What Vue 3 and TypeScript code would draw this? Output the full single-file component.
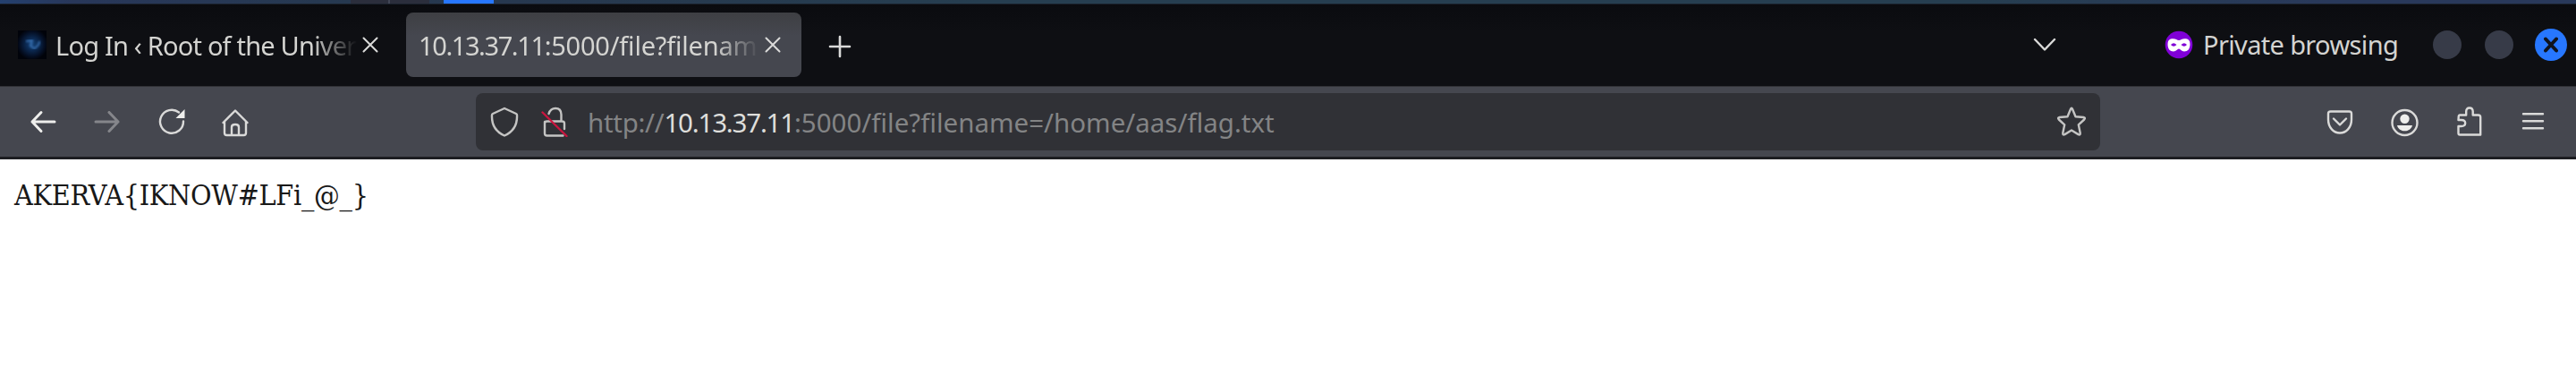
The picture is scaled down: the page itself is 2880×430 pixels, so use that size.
<script setup lang="ts">
interface Tab {
  host: string
  title: string
  active: boolean
  icon: boolean
}

const tabs: Tab[] = [
  { host: '', title: 'Log In ‹ Root of the Univer', active: false, icon: true },
  { host: '10.13.37.11', title: ':5000/file?filenam', active: true, icon: false },
]

const url = { scheme: 'http://', host: '10.13.37.11', rest: ':5000/file?filename=/home/aas/flag.txt' }
const flag = 'AKERVA{IKNOW#LFi_@_}'
</script>

<template>
  <div class="screen">
    <div class="desktop-strip">
      <span class="workspace"></span>
      <span class="active-task"></span>
    </div>
    <header class="titlebar">
      <div v-for="tab in tabs" :key="tab.title" class="tab" :class="{ active: tab.active }">
        <span v-if="tab.icon" class="favicon">
          <svg viewBox="0 0 32 32" width="32" height="32">
            <defs>
              <radialGradient id="nebula" cx="50%" cy="48%" r="55%">
                <stop offset="0" stop-color="#164378" />
                <stop offset="0.4" stop-color="#0b2850" />
                <stop offset="0.8" stop-color="#040d20" />
                <stop offset="1" stop-color="#01030a" />
              </radialGradient>
              <filter id="glow"><feGaussianBlur stdDeviation="1" /></filter>
            </defs>
            <rect width="32" height="32" fill="url(#nebula)" />
            <path class="swirl" filter="url(#glow)" d="M10 12l6-1-2 6 4 3M19 20l4-4 1-3" />
          </svg>
        </span>
        <span class="title"><span class="host">{{ tab.host }}</span>{{ tab.title }}</span>
        <svg class="close" viewBox="0 0 18 18" width="18" height="18"><path d="M1.500 1.500l15 15M16.500 1.500l-15 15" /></svg>
      </div>
      <svg class="new-tab" viewBox="0 0 26 26" width="26" height="26"><path d="M13 2v22M2 13h22" /></svg>
      <svg class="all-tabs" viewBox="0 0 26 18" width="26" height="18"><path d="M2 3L13 14.500 24 3" /></svg>
      <svg class="mask" viewBox="0 0 32 40" width="32" height="40">
        <circle cx="16" cy="20" r="15.3" fill="#8000d7" />
        <path fill="#fff" fill-rule="evenodd" d="M3.500 19.500C3.500 15 5.500 13.300 9.500 13.300C12.500 13.300 14 15 16 15S19.500 13.300 22.500 13.300C26.500 13.300 28.500 15 28.500 19.500C28.500 24.500 26 27.500 22 27.500C19 27.500 17.500 24.500 16 24.500S13 27.500 10 27.500C6 27.500 3.500 24.500 3.500 19.500ZM7 20Q10 23.500 13.500 20Q10 16.500 7 20ZM18.500 20Q22 23.500 25 20Q22 16.500 18.500 20Z" />
      </svg>
      <span class="private">Private browsing</span>
      <span class="window-button first"></span>
      <span class="window-button"></span>
      <span class="window-button quit">
        <svg viewBox="0 0 16 20" width="16" height="20"><path d="M2 3.500L14 16.500M14 3.500L2 16.500" /></svg>
      </span>
    </header>
    <nav class="toolbar">
      <div class="nav-icons">
        <svg viewBox="0 0 32 32" width="32" height="32"><path class="bold" d="M29 16H4M14 5.500L4 16l10 10.500" /></svg>
        <svg class="dim" viewBox="0 0 32 32" width="32" height="32"><path class="bold" d="M3 16h25M18 5.500L28 16 18 26.500" /></svg>
        <svg viewBox="0 0 32 32" width="32" height="32">
          <path d="M29 15.500A13 13 0 1 1 24 5.500" />
          <path class="solid" d="M30.500 2v10H20.500Z" />
        </svg>
        <svg class="home" viewBox="0 0 32 32" width="32" height="32"><path d="M1.500 16L15 2.500l13.500 13.500M3 15V27.500q0 2.500 2.500 2.500h19q2.500 0 2.500-2.500V15M11 30v-9q0-3 4-3t4 3V30" /></svg>
      </div>
      <div class="urlbar">
        <svg class="shield" viewBox="0 0 32 34" width="32" height="34"><path d="M16 2L29 8Q30 8.500 30 9.500C30.500 20 26 28 16 32.500C6 28 1.500 20 2 9.500Q2 8.500 3 8Z" /></svg>
        <svg class="lock" viewBox="0 0 32 34" width="32" height="34">
          <path d="M8.500 8C10 3.500 13 2 16 2Q22.500 2 22.500 9V16.500M4 17v13q0 2.500 2.500 2.500h18M26 25V19q0-2.500-2.500-2.500H6.500Q4 16.500 4 19" />
          <path class="strike" d="M1.500 6.500l27 26.500" />
        </svg>
        <span class="address"><span class="scheme">{{ url.scheme }}</span><b>{{ url.host }}</b>{{ url.rest }}</span>
        <svg class="star" viewBox="0 0 34 34" width="34" height="34"><path d="M15.900 3Q17 0.600 18.100 3L21.500 11.200 30.500 12Q33 12.500 31.200 14.500L24.800 20.300 26.700 29.600Q27 32.300 24.600 31.100L17 26.500 9.400 31.100Q7 32.300 7.300 29.600L9.200 20.300 2.800 14.500Q1 12.500 3.500 12L12.500 11.200Z" /></svg>
      </div>
      <div class="tool-icons">
        <svg viewBox="0 0 32 34" width="32" height="34"><path d="M5.500 5.500h21q2.500 0 2.500 2.500v6.500c0 9-6 15-13 15S3 23.500 3 14.500V8Q3 5.500 5.500 5.500ZM9 13.500l7 7 7-7" /></svg>
        <svg viewBox="0 0 32 34" width="32" height="34">
          <circle cx="16.500" cy="18" r="14" />
          <circle class="solid" cx="16.500" cy="13.800" r="5.200" />
          <path class="solid" d="M8 21h17c-1 4-4.500 6.300-8.500 6.300s-7.500-2.300-8.500-6.300Z" />
        </svg>
        <svg viewBox="0 0 32 34" width="32" height="34"><path transform="translate(1.200 0)" d="M3.500 12Q3.500 9.500 5 9.500H12V5.500Q12 1.500 15.700 1.500T19.500 5.500V9.500H25.500q2.500 0 2.500 2.500V31.500H5q-1.700 0-1.700-1.700V22H6.500Q11 22 11 18.500T6.500 15H3.300Z" /></svg>
        <svg viewBox="0 0 32 34" width="32" height="34"><path d="M5 8.200h22M5 16.200h22M5 24.200h22" /></svg>
      </div>
    </nav>
    <main class="page">{{ flag }}</main>
  </div>
</template>

<style>
body {
  margin: 0;
  background: #fff;
}
</style>

<style scoped>
.screen {
  width: 2880px;
  height: 430px;
  overflow: hidden;
  background: #fff;
  display: flex;
  flex-direction: column;
  font-family: "Noto Sans", sans-serif;
  font-size: 29px;
  color: #d4d4d1;
}
.screen > * { flex: none; }
svg {
  display: block;
  flex: none;
  fill: none;
  stroke: #dadad9;
  stroke-width: 2.4;
  stroke-linecap: round;
  stroke-linejoin: round;
}
.solid { fill: #eeeeec; stroke: none; }
.bold { stroke: #eeeeec; stroke-width: 3; }
.dim { opacity: .38; }
.desktop-strip {
  height: 5px;
  box-sizing: border-box;
  border-bottom: 1px solid #1a212c;
  display: flex;
  background: linear-gradient(90deg, #24406f 0, #28375a 80px, #263950 392px, #27384f 560px, #263e50 1100px, #263e50 2200px, #29395b 2600px, #29395b 100%);
}
.workspace {
  width: 88px;
  margin-left: 392px;
  background: linear-gradient(90deg, #2b2e3c 42px, #414656 42px, #414656 44px, #2b2e3c 44px);
}
.active-task { width: 56px; margin-left: 16px; background: #2777ff; }
.titlebar {
  height: 91px;
  box-sizing: border-box;
  padding: 0 10px 1px 12px;
  display: flex;
  align-items: center;
  background: linear-gradient(#0a0b0f, #0e0f13 30px);
}
.tab {
  height: 72px;
  width: 442px;
  flex: none;
  box-sizing: border-box;
  padding: 0 23px 0 14px;
  border-radius: 8px;
  display: flex;
  align-items: center;
}
.tab:first-child { padding: 0 31px 0 8px; }
.tab.active { background: linear-gradient(#3e3f43, #45474f 26px); }
.favicon { width: 32px; margin-right: 10px; }
.favicon rect { stroke: none; }
.swirl { stroke: #3f7cc0; stroke-width: 2.4; opacity: .7; }
.title {
  flex: 1;
  min-width: 0;
  height: 42px;
  line-height: 44px;
  white-space: nowrap;
  letter-spacing: -.8px;
  mask-image: linear-gradient(90deg, #000 calc(100% - 50px), transparent);
}
.tab.active .title { letter-spacing: -.2px; }
.tab.active .host { letter-spacing: -1.4px; }
.close { margin-left: 6px; stroke-width: 2; }
.new-tab { margin: 3px 0 0 30px; stroke-width: 2.6; }
.all-tabs { margin-left: auto; margin-right: 121px; }
.mask { stroke: none; margin-right: 11px; }
.private {
  width: 218px;
  padding-bottom: 2px;
  white-space: nowrap;
  letter-spacing: -.65px;
}
.window-button {
  width: 32px;
  height: 32px;
  flex: none;
  margin-left: 26px;
  border-radius: 50%;
  background: #373b48;
}
.window-button.first { margin-left: 39px; }
.window-button.quit {
  width: 36px;
  height: 36px;
  margin-left: 24px;
  display: flex;
  align-items: center;
  justify-content: center;
  background: #2777ff;
}
.quit svg { stroke: #10131c; stroke-width: 4; }
.toolbar {
  height: 82px;
  box-sizing: border-box;
  border-top: 1px solid #303136;
  border-bottom: 3px solid #1d1e22;
  padding: 0 32px;
  display: flex;
  align-items: center;
  background: #45474f;
}
.nav-icons { display: flex; gap: 40px; width: 500px; flex: none; }
.home { margin-top: 1px; }
.urlbar {
  width: 1816px;
  height: 64px;
  flex: none;
  box-sizing: border-box;
  padding: 0 15px 0 16px;
  border-radius: 8px;
  display: flex;
  align-items: center;
  background: #303136;
}
.urlbar svg { stroke: #c4c4c3; }
.lock { margin-left: 25px; }
.urlbar .strike { stroke: #c9163f; }
.address { margin-left: 20px; font-size: 29.5px; color: #838485; white-space: nowrap; }
.scheme { letter-spacing: -.3px; }
.address b { font-weight: 400; color: #dededb; letter-spacing: -1.2px; }
.star { margin-left: auto; }
.tool-icons { display: flex; gap: 40px; margin-left: 252px; }
.page {
  padding: 18px 16px;
  line-height: 44px;
  font-family: "DejaVu Serif Condensed", "DejaVu Serif", serif;
  font-stretch: condensed;
  font-size: 32px;
  letter-spacing: -.27px;
  color: #181818;
}
</style>
